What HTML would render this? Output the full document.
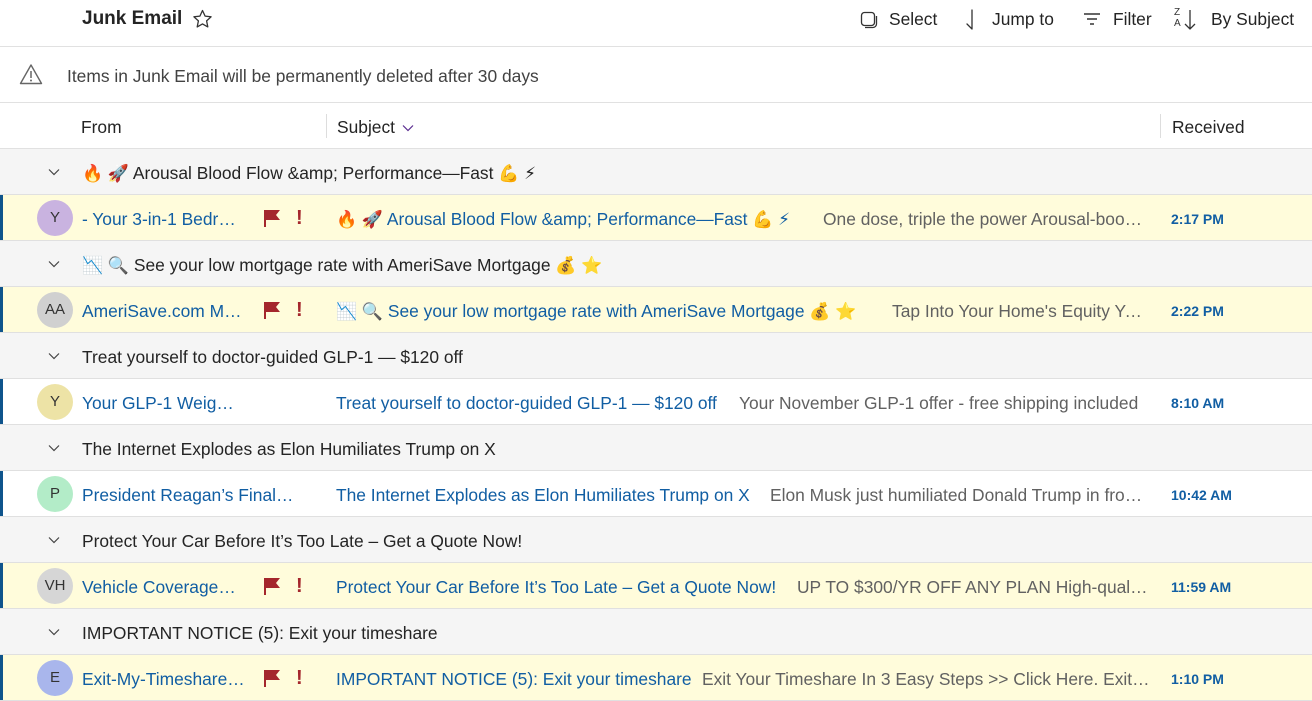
<!DOCTYPE html>
<html><head><meta charset="utf-8"><style>
*{margin:0;padding:0;box-sizing:border-box}
body{width:1312px;height:701px;overflow:hidden;background:#fff;font-family:"Liberation Sans","DejaVu Sans",sans-serif;color:#242424;font-size:17.4px;position:relative}
.a{position:absolute;white-space:nowrap}
.hl{position:absolute;left:0;width:1312px;height:1px;background:#e1e1e1}
.row{position:absolute;left:0;width:1312px;height:46px;border-bottom:1px solid #e0e0e0}
.g{background:#f5f5f5}
.it{background:#fff}
.it.y{background:#fffcdb}
.it:before{content:"";position:absolute;left:0;top:0;bottom:0;width:3px;background:#0f548c}
.row .a{top:14px}
.av{position:absolute;left:37px;top:5px;width:36px;height:36px;border-radius:50%;text-align:center;line-height:36px;font-size:15px;color:#333}
.snd{left:82px;color:#115ea3;width:160px;overflow:hidden;text-overflow:ellipsis}
.sub{left:336px;color:#115ea3}
.pv{color:#616161;overflow:hidden;text-overflow:ellipsis}
.tm{left:1171px;color:#115ea3;font-size:14px;font-weight:bold;top:16px!important}
.flag{position:absolute;left:263px;top:14px}
.ex{position:absolute;left:296px;top:12px;color:#a4262c;font-weight:bold;font-size:20px}
.chev{position:absolute;left:48px;top:19px}
.gt{left:82px}
.em{font-size:17px}
</style></head><body>
<div class="a" style="left:82px;top:8px;font-size:19px;font-weight:bold">Junk Email</div>
<svg class="a" style="left:192px;top:9px" width="21" height="20" viewBox="0 0 21 20"><path d="M10.5 1.5l2.6 5.6 6 .7-4.5 4.1 1.2 6-5.3-3-5.3 3 1.2-6L1.9 7.8l6-.7z" fill="none" stroke="#333" stroke-width="1.3" stroke-linejoin="round"/></svg>
<svg class="a" style="left:860px;top:11px" width="18" height="18" viewBox="0 0 18 18"><rect x="1.5" y="1.5" width="13" height="13" rx="3" fill="none" stroke="#333" stroke-width="1.3"/><path d="M16.5 5v8a3.5 3.5 0 0 1-3.5 3.5H5" fill="none" stroke="#333" stroke-width="1.3"/></svg>
<div class="a" style="left:889px;top:9px">Select</div>
<svg class="a" style="left:963px;top:9px" width="16" height="22" viewBox="0 0 16 22"><path d="M9 1v19M9 20l-5-5" fill="none" stroke="#333" stroke-width="1.3" stroke-linecap="round"/></svg>
<div class="a" style="left:992px;top:9px">Jump to</div>
<svg class="a" style="left:1083px;top:12px" width="18" height="14" viewBox="0 0 18 14"><path d="M1 2h16M4 7h10M7 12h4" stroke="#333" stroke-width="1.4"/></svg>
<div class="a" style="left:1113px;top:9px">Filter</div>
<div class="a" style="left:1174px;top:7px;font-size:10px;line-height:11px;color:#333">Z<br>A</div>
<svg class="a" style="left:1184px;top:9px" width="12" height="22" viewBox="0 0 12 22"><path d="M6 1v19M1 15l5 5 5-5" fill="none" stroke="#333" stroke-width="1.3"/></svg>
<div class="a" style="left:1211px;top:9px">By Subject</div>
<div class="hl" style="top:46px"></div>
<svg class="a" style="left:19px;top:63px" width="24" height="22" viewBox="0 0 24 22"><path d="M12 2L1.5 20.5h21z" fill="none" stroke="#666" stroke-width="1.4" stroke-linejoin="round"/><path d="M12 8v7" stroke="#666" stroke-width="1.5"/><circle cx="12" cy="17.5" r="1" fill="#666"/></svg>
<div class="a" style="left:67px;top:66px;color:#424242">Items in Junk Email will be permanently deleted after 30 days</div>
<div class="hl" style="top:102px"></div>
<div class="a" style="left:81px;top:117px">From</div>
<div class="a" style="left:326px;top:114px;width:1px;height:24px;background:#ddd"></div>
<div class="a" style="left:337px;top:117px">Subject</div>
<svg class="a" style="left:402px;top:124px" width="12" height="8" viewBox="0 0 12 8"><path d="M1 1.5l5 5 5-5" fill="none" stroke="#5c2e91" stroke-width="1.2"/></svg>
<div class="a" style="left:1160px;top:114px;width:1px;height:24px;background:#ddd"></div>
<div class="a" style="left:1172px;top:117px">Received</div>
<div class="hl" style="top:148px"></div>

<div class="row g" style="top:149px"><svg class="chev" width="12" height="8" viewBox="0 0 12 8"><path d="M1 1.5l5 5 5-5" fill="none" stroke="#444" stroke-width="1.2"/></svg><div class="a gt"><span class="em">🔥 🚀</span> Arousal Blood Flow &amp;amp; Performance—Fast <span class="em">💪 ⚡</span></div></div>
<div class="row it y" style="top:195px"><div class="av" style="background:#c9b3e0">Y</div><div class="a snd">- Your 3-in-1 Bedroom Boost</div><svg class="flag" width="18" height="18" viewBox="0 0 18 18"><path d="M2 1v17" stroke="#a4262c" stroke-width="2"/><path d="M2 1h15l-4 5 4 5H2z" fill="#a4262c"/></svg><div class="ex">!</div><div class="a sub"><span class="em">🔥 🚀</span> Arousal Blood Flow &amp;amp; Performance—Fast <span class="em">💪 ⚡</span></div><div class="a pv" style="left:823px;width:327px">One dose, triple the power Arousal-boosting formula</div><div class="a tm">2:17 PM</div></div>

<div class="row g" style="top:241px"><svg class="chev" width="12" height="8" viewBox="0 0 12 8"><path d="M1 1.5l5 5 5-5" fill="none" stroke="#444" stroke-width="1.2"/></svg><div class="a gt"><span class="em">📉 🔍</span> See your low mortgage rate with AmeriSave Mortgage <span class="em">💰 ⭐</span></div></div>
<div class="row it y" style="top:287px"><div class="av" style="background:#d0d0d0">AA</div><div class="a snd">AmeriSave.com Mortgage</div><svg class="flag" width="18" height="18" viewBox="0 0 18 18"><path d="M2 1v17" stroke="#a4262c" stroke-width="2"/><path d="M2 1h15l-4 5 4 5H2z" fill="#a4262c"/></svg><div class="ex">!</div><div class="a sub"><span class="em">📉 🔍</span> See your low mortgage rate with AmeriSave Mortgage <span class="em">💰 ⭐</span></div><div class="a pv" style="left:892px;width:256px">Tap Into Your Home's Equity Your rate</div><div class="a tm">2:22 PM</div></div>

<div class="row g" style="top:333px"><svg class="chev" width="12" height="8" viewBox="0 0 12 8"><path d="M1 1.5l5 5 5-5" fill="none" stroke="#444" stroke-width="1.2"/></svg><div class="a gt">Treat yourself to doctor-guided GLP-1 — $120 off</div></div>
<div class="row it" style="top:379px"><div class="av" style="background:#ede3a6">Y</div><div class="a snd">Your GLP-1 Weight Loss Team</div><div class="a sub">Treat yourself to doctor-guided GLP-1 — $120 off</div><div class="a pv" style="left:739px;width:410px">Your November GLP-1 offer - free shipping included</div><div class="a tm">8:10 AM</div></div>

<div class="row g" style="top:425px"><svg class="chev" width="12" height="8" viewBox="0 0 12 8"><path d="M1 1.5l5 5 5-5" fill="none" stroke="#444" stroke-width="1.2"/></svg><div class="a gt">The Internet Explodes as Elon Humiliates Trump on X</div></div>
<div class="row it" style="top:471px"><div class="av" style="background:#b3ecc8">P</div><div class="a snd" style="width:212px">President Reagan’s Final Warning</div><div class="a sub">The Internet Explodes as Elon Humiliates Trump on X</div><div class="a pv" style="left:770px;width:380px">Elon Musk just humiliated Donald Trump in front of</div><div class="a tm">10:42 AM</div></div>

<div class="row g" style="top:517px"><svg class="chev" width="12" height="8" viewBox="0 0 12 8"><path d="M1 1.5l5 5 5-5" fill="none" stroke="#444" stroke-width="1.2"/></svg><div class="a gt">Protect Your Car Before It’s Too Late – Get a Quote Now!</div></div>
<div class="row it y" style="top:563px"><div class="av" style="background:#d6d6d6">VH</div><div class="a snd" style="width:158px">Vehicle Coverage Hub</div><svg class="flag" width="18" height="18" viewBox="0 0 18 18"><path d="M2 1v17" stroke="#a4262c" stroke-width="2"/><path d="M2 1h15l-4 5 4 5H2z" fill="#a4262c"/></svg><div class="ex">!</div><div class="a sub">Protect Your Car Before It’s Too Late – Get a Quote Now!</div><div class="a pv" style="left:797px;width:353px">UP TO $300/YR OFF ANY PLAN High-quality coverage</div><div class="a tm">11:59 AM</div></div>

<div class="row g" style="top:609px"><svg class="chev" width="12" height="8" viewBox="0 0 12 8"><path d="M1 1.5l5 5 5-5" fill="none" stroke="#444" stroke-width="1.2"/></svg><div class="a gt">IMPORTANT NOTICE (5): Exit your timeshare</div></div>
<div class="row it y" style="top:655px"><div class="av" style="background:#a9b6ec">E</div><div class="a snd" style="width:164px">Exit-My-Timeshare Team</div><svg class="flag" width="18" height="18" viewBox="0 0 18 18"><path d="M2 1v17" stroke="#a4262c" stroke-width="2"/><path d="M2 1h15l-4 5 4 5H2z" fill="#a4262c"/></svg><div class="ex">!</div><div class="a sub">IMPORTANT NOTICE (5): Exit your timeshare</div><div class="a pv" style="left:702px;width:450px">Exit Your Timeshare In 3 Easy Steps &gt;&gt; Click Here. Exit My Timeshare</div><div class="a tm">1:10 PM</div></div>
</body></html>
